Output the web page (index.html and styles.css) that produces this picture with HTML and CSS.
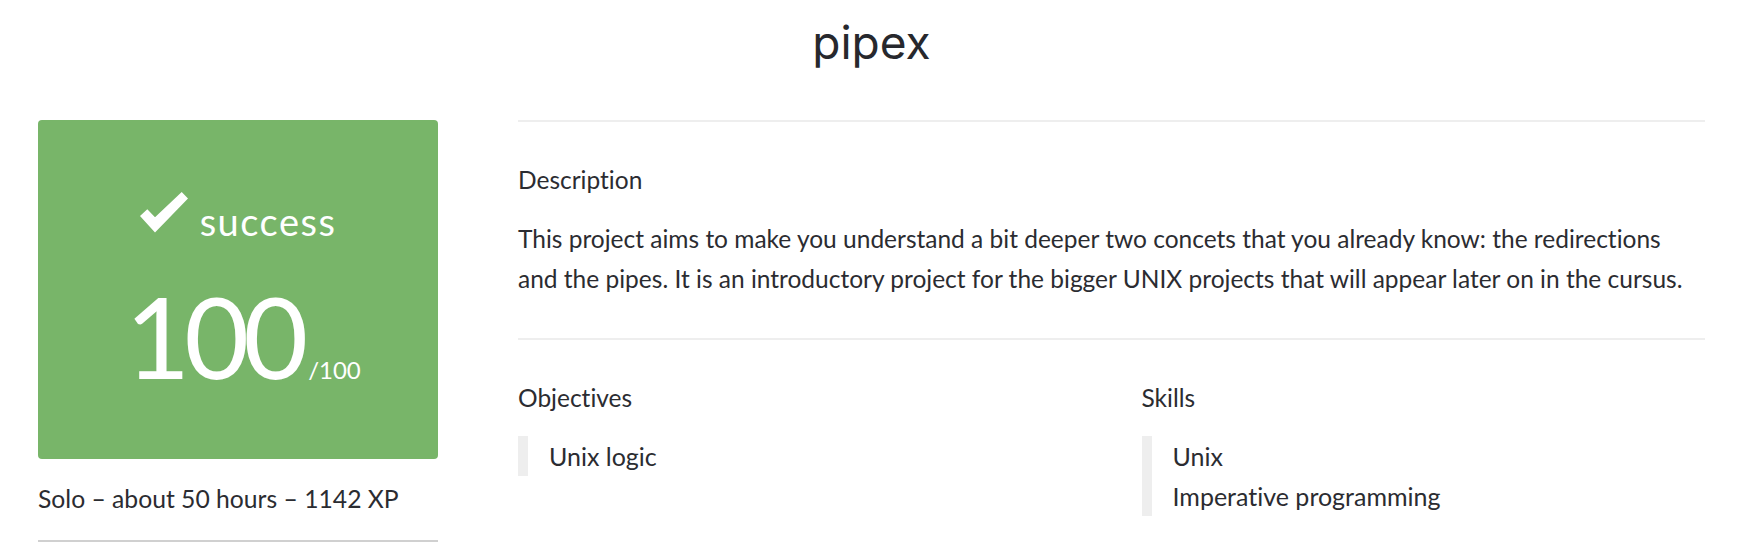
FILE: index.html
```html
<!DOCTYPE html>
<html lang="en">
<head>
<meta charset="utf-8">
<title>pipex</title>
<link rel="stylesheet" href="styles.css">
</head>
<body>
<div class="page">
  <h1 class="title">pipex</h1>
  <div class="main">
    <aside class="side">
      <div class="score-card">
        <div class="status">
          <svg class="check" viewBox="0 0 48 41" aria-hidden="true"><polygon points="0,24 7.3,17.3 15,25.3 41.7,0 48,6.5 15,40.5"/></svg>
          <span class="status-text">success</span>
        </div>
        <div class="score"><span class="mark">100</span><span class="max">/100</span></div>
      </div>
      <p class="meta">Solo – about 50 hours – 1142 XP</p>
      <div class="side-rule"></div>
    </aside>
    <section class="content">
      <div class="block">
        <h2 class="block-title">Description</h2>
        <p class="desc">This project aims to make you understand a bit deeper two concets that you already know: the redirections and the pipes. It is an introductory project for the bigger UNIX projects that will appear later on in the cursus.</p>
      </div>
      <div class="block cols">
        <div class="col">
          <h2 class="block-title">Objectives</h2>
          <ul class="tags"><li>Unix logic</li></ul>
        </div>
        <div class="col">
          <h2 class="block-title">Skills</h2>
          <ul class="tags"><li>Unix</li><li>Imperative programming</li></ul>
        </div>
      </div>
    </section>
  </div>
</div>
</body>
</html>
```
FILE: styles.css
```css
* { box-sizing: border-box; }
html, body { margin: 0; padding: 0; background: #fff; }
body {
  font-family: Lato, "Noto Sans", sans-serif;
  color: #2b2c31;
  font-size: 25px;
  font-variant-ligatures: none;
}
.page { padding: 0 47px 0 38px; }
.title {
  margin: 14px 0 50px;
  font-family: Inter, "Noto Sans", sans-serif;
  font-weight: 400;
  font-size: 46px;
  line-height: 56px;
  text-align: center;
  color: #27282d;
}
.main {
  display: grid;
  grid-template-columns: 400px 1fr;
  column-gap: 80px;
}
.score-card {
  height: 339px;
  background: #78b569;
  border-radius: 4px;
  color: #fff;
  display: flex;
  flex-direction: column;
  align-items: center;
  padding-top: 72px;
}
.status { display: flex; align-items: flex-start; gap: 12px; }
.check { width: 48px; height: 41px; fill: #fff; flex: none; }
.status-text { font-size: 38px; line-height: 38px; margin-top: 10px; letter-spacing: 1.5px; }
.score { margin-top: 36px; display: flex; align-items: baseline; padding-left: 10px; }
.mark { font-size: 112px; line-height: 120px; letter-spacing: -6px; }
.max { font-size: 24px; margin-left: 6px; }
.meta { margin: 20px 0 0; line-height: 40px; font-size: 24.7px; }
.side-rule { margin-top: 21px; height: 2px; background: #d0d0d0; }
.content { border-top: 2px solid #eeeeee; }
.block { padding: 38px 0 39px; border-bottom: 2px solid #eeeeee; }
.block-title { margin: 0; font-weight: 400; font-size: 24.5px; line-height: 40px; }
.desc { margin: 19px 0 0; line-height: 40px; font-size: 24.5px; }
.cols { display: grid; grid-template-columns: 1fr 1fr; column-gap: 60px; border-bottom: none; }
.tags {
  list-style: none;
  margin: 18px 0 0;
  padding: 0 0 0 21px;
  border-left: 10px solid #eeeeee;
}
.tags li { line-height: 40px; font-size: 25px; }
```
